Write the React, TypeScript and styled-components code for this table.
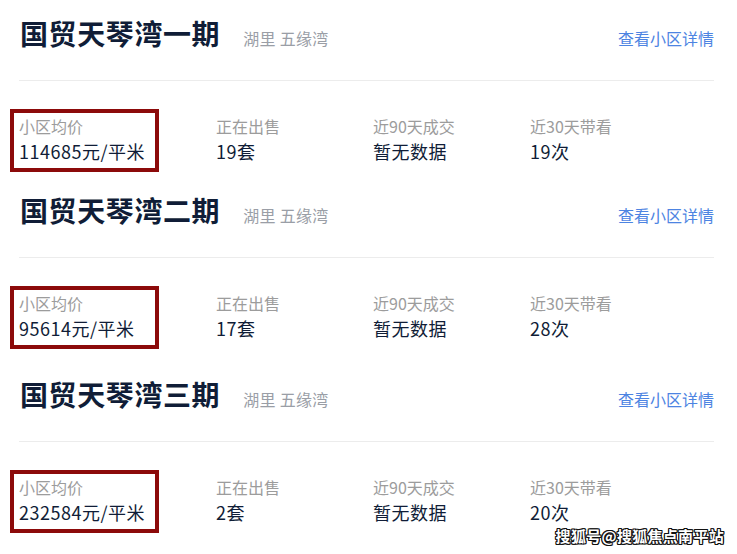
import React from "react";
import styled, { createGlobalStyle } from "styled-components";

const GlobalStyle = createGlobalStyle`
  html, body { margin: 0; padding: 0; background: #ffffff; }
  body { font-family: "Noto Sans CJK SC", "Noto Sans", sans-serif; }
`;

const Page = styled.div`
  position: relative;
  width: 737px;
  height: 554px;
  overflow: hidden;
  background: #ffffff;
  padding: 0 23px 0 19px;
  box-sizing: border-box;
`;

const Section = styled.section<{ $padBottom: number }>`
  display: flex;
  flex-direction: column;
  padding-bottom: ${(p) => p.$padBottom}px;
`;

const Header = styled.header`
  display: flex;
  align-items: baseline;
  padding: 13px 0 27px;
`;

const Title = styled.h2`
  margin: 0 0 0 1px;
  font-size: 28px;
  line-height: 40px;
  font-weight: 700;
  letter-spacing: 0.6px;
  color: #101d37;
`;

const Area = styled.span`
  margin-left: 23px;
  font-size: 16px;
  line-height: 24px;
  letter-spacing: 0.3px;
  color: #9a9ea6;
`;

const DetailLink = styled.a`
  margin-left: auto;
  font-size: 16px;
  line-height: 24px;
  color: #4d84e2;
  text-decoration: none;
`;

const Divider = styled.hr`
  margin: 0;
  border: none;
  height: 1px;
  background: #ececec;
`;

const Stats = styled.div`
  display: grid;
  grid-template-columns: 197px 157px 157px 157px;
  padding-top: 33px;
`;

const Stat = styled.div<{ $marked?: boolean }>`
  position: relative;
  display: flex;
  flex-direction: column;
  &::before {
    content: "";
    display: ${(p) => (p.$marked ? "block" : "none")};
    position: absolute;
    left: -9px;
    top: -5px;
    width: 149px;
    height: 63px;
    box-sizing: border-box;
    border: 4px solid #8c0a0a;
  }
`;

const Label = styled.span`
  font-size: 16px;
  line-height: 24px;
  color: #9c9c9c;
`;

const Value = styled.span`
  font-size: 18px;
  line-height: 26px;
  letter-spacing: 0.5px;
  color: #101d37;
`;

const Watermark = styled.div`
  position: absolute;
  right: 13px;
  top: 525px;
  font-size: 15px;
  line-height: 22px;
  font-weight: 700;
  letter-spacing: 0.3px;
  color: #ffffff;
  text-shadow: 1px 0 0 #111, -1px 0 0 #111, 0 1px 0 #111, 0 -1px 0 #111,
    1px 1px 0 #111, -1px -1px 0 #111, 1px -1px 0 #111, -1px 1px 0 #111;
`;

type Community = {
  name: string;
  price: string;
  onSale: string;
  deals: string;
  visits: string;
  padBottom: number;
};

const data: Community[] = [
  { name: "国贸天琴湾一期", price: "114685元/平米", onSale: "19套", deals: "暂无数据", visits: "19次", padBottom: 13 },
  { name: "国贸天琴湾二期", price: "95614元/平米", onSale: "17套", deals: "暂无数据", visits: "28次", padBottom: 20 },
  { name: "国贸天琴湾三期", price: "232584元/平米", onSale: "2套", deals: "暂无数据", visits: "20次", padBottom: 0 },
];

export default function App() {
  return (
    <>
      <GlobalStyle />
      <Page>
        {data.map((c) => (
          <Section key={c.name} $padBottom={c.padBottom}>
            <Header>
              <Title>{c.name}</Title>
              <Area>湖里 五缘湾</Area>
              <DetailLink href="#">查看小区详情</DetailLink>
            </Header>
            <Divider />
            <Stats>
              <Stat $marked>
                <Label>小区均价</Label>
                <Value>{c.price}</Value>
              </Stat>
              <Stat>
                <Label>正在出售</Label>
                <Value>{c.onSale}</Value>
              </Stat>
              <Stat>
                <Label>近90天成交</Label>
                <Value>{c.deals}</Value>
              </Stat>
              <Stat>
                <Label>近30天带看</Label>
                <Value>{c.visits}</Value>
              </Stat>
            </Stats>
          </Section>
        ))}
        <Watermark>搜狐号@搜狐焦点南平站</Watermark>
      </Page>
    </>
  );
}
